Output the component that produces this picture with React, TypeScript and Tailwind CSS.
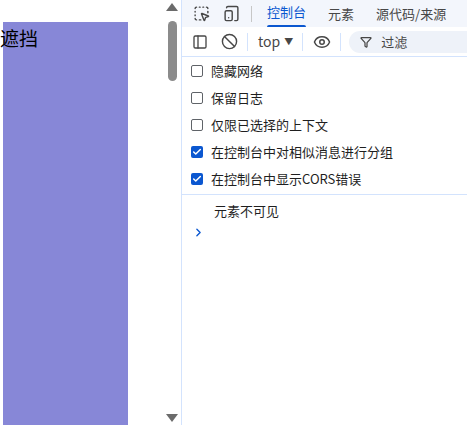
import { Ban, Eye, Filter, ChevronRight, Check, PanelLeft, SquareDashedMousePointer, TabletSmartphone } from "lucide-react";

const font = { fontFamily: '"Microsoft YaHei","Noto Sans CJK SC",sans-serif' };

function Row({ label, checked }: { label: string; checked?: boolean }) {
  return (
    <div className="flex h-[27px] items-center gap-[8px] pl-[9px] text-[13px] text-[#1f1f1f]">
      {checked ? (
        <span className="flex h-[12px] w-[12px] items-center justify-center rounded-[2px] bg-[#0b57d0]">
          <Check size={10} strokeWidth={3.5} className="text-white" />
        </span>
      ) : (
        <span className="h-[12px] w-[12px] rounded-[2px] border border-[#5f6368]" />
      )}
      <span>{label}</span>
    </div>
  );
}

export default function App() {
  return (
    <div className="flex h-[425px] w-[467px] overflow-hidden bg-white" style={font}>
      <div className="relative w-[163px] shrink-0">
        <div className="absolute left-[3px] top-[22px] h-[403px] w-[125px] bg-[#8787d7]" />
        <div className="relative pt-[24px] text-[19px] leading-[28px] text-black">遮挡</div>
      </div>
      <div className="flex w-[18px] shrink-0 flex-col items-center justify-between bg-white py-[3px]">
        <div className="flex flex-col items-center">
          <div className="h-0 w-0 border-x-[6px] border-b-[8px] border-x-transparent border-b-[#6b6b6b]" />
          <div className="mt-[10px] h-[60px] w-[9px] rounded-full bg-[#8b8b8b]" />
        </div>
        <div className="h-0 w-0 border-x-[6px] border-t-[8px] border-x-transparent border-t-[#6b6b6b]" />
      </div>
      <div className="flex flex-1 flex-col border-l border-[#d3e3fd]">
        <div className="flex h-[27px] items-center bg-[#f3f6fc] text-[13px] text-[#474747]">
          <SquareDashedMousePointer size={17} className="ml-[11px] text-[#474747]" />
          <TabletSmartphone size={17} className="ml-[13px] text-[#474747]" />
          <div className="ml-[11px] h-[16px] w-px bg-[#c7c7c7]" />
          <div className="ml-[4px] flex h-full flex-col justify-center px-[11px] text-[#0b57d0]">
            <span className="mt-[2px]">控制台</span>
            <div className="mt-[3px] h-[3px] rounded-t bg-[#0b57d0]" />
          </div>
          <span className="ml-[11px]">元素</span>
          <span className="ml-[22px]">源代码/来源</span>
        </div>
        <div className="flex h-[30px] items-center border-b border-[#d3e3fd] text-[14px] text-[#474747]">
          <PanelLeft size={16} className="ml-[10px]" />
          <Ban size={17} className="ml-[13px]" />
          <div className="ml-[9px] h-[18px] w-px bg-[#d3e3fd]" />
          <span className="ml-[10px]">top</span>
          <span className="ml-[4px] text-[9px]">▼</span>
          <div className="ml-[9px] h-[18px] w-px bg-[#d3e3fd]" />
          <Eye size={18} className="ml-[10px]" />
          <div className="ml-[9px] h-[18px] w-px bg-[#d3e3fd]" />
          <div className="ml-[8px] flex h-[22px] flex-1 items-center rounded-l-full bg-[#eef2f9] pl-[11px] text-[13px]">
            <Filter size={12} strokeWidth={2.5} />
            <span className="ml-[9px]">过滤</span>
          </div>
        </div>
        <div className="border-b border-[#d3e3fd] pb-[2px]">
          <Row label="隐藏网络" />
          <Row label="保留日志" />
          <Row label="仅限已选择的上下文" />
          <Row label="在控制台中对相似消息进行分组" checked />
          <Row label="在控制台中显示CORS错误" checked />
        </div>
        <div className="pl-[32px] pt-[6px] text-[13px] leading-[20px] text-[#1f1f1f]">元素不可见</div>
        <ChevronRight size={13} strokeWidth={2.5} className="ml-[10px] mt-[5px] text-[#0b57d0]" />
      </div>
    </div>
  );
}
